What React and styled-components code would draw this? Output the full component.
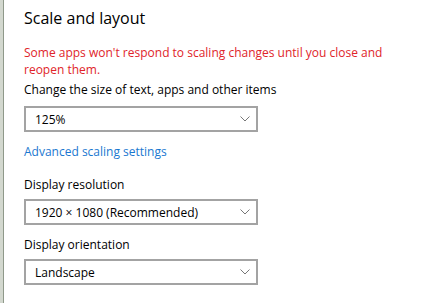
import React from 'react';
import styled, { createGlobalStyle } from 'styled-components';

const GlobalStyle = createGlobalStyle`
  html, body {
    margin: 0;
    padding: 0;
    background: #fff;
  }
  body {
    font-family: "Open Sans", "Noto Sans", sans-serif;
    color: #000;
  }
`;

const Page = styled.div`
  width: 436px;
  height: 303px;
  box-sizing: border-box;
  border-left: 3px solid #d3d8cf;
  box-shadow: inset 1px 0 0 #8f998a;
  padding: 6px 0 0 21px;
  overflow: hidden;
`;

const Title = styled.h2`
  margin: 0;
  font-size: 16px;
  font-weight: 400;
  line-height: 24px;
  color: #000;
`;

const Warning = styled.p`
  margin: 14px 0 0;
  max-width: 370px;
  font-size: 12px;
  line-height: 17px;
  color: #e0242a;
`;

const Label = styled.div`
  margin-top: ${p => p.gap}px;
  font-size: 12px;
  line-height: 17px;
  color: #000;
`;

const Select = styled.div`
  margin-top: ${p => p.gap}px;
  width: 234px;
  height: 26px;
  box-sizing: border-box;
  border: 2px solid #a3a3a3;
  display: flex;
  align-items: center;
  justify-content: space-between;
  padding: 0 6px 0 9px;
  font-size: 12px;
  line-height: 17px;
  color: #000;
`;

const Link = styled.a`
  display: block;
  margin-top: 11px;
  font-size: 12px;
  line-height: 17px;
  color: #1a78d0;
  text-decoration: none;
`;

const Chevron = () => (
  <svg width="10" height="6" viewBox="0 0 10 6">
    <path d="M0.5 0.5 L5 5 L9.5 0.5" fill="none" stroke="#777" strokeWidth="1" />
  </svg>
);

const Dropdown = ({ value, gap }) => (
  <Select gap={gap}>
    <span>{value}</span>
    <Chevron />
  </Select>
);

export default function App() {
  return (
    <>
      <GlobalStyle />
      <Page>
        <Title>Scale and layout</Title>
        <Warning>
          Some apps won't respond to scaling changes until you close and reopen them.
        </Warning>
        <Label gap={3}>Change the size of text, apps and other items</Label>
        <Dropdown value="125%" gap={8} />
        <Link href="#">Advanced scaling settings</Link>
        <Label gap={16}>Display resolution</Label>
        <Dropdown value="1920 × 1080 (Recommended)" gap={6} />
        <Label gap={11}>Display orientation</Label>
        <Dropdown value="Landscape" gap={6} />
      </Page>
    </>
  );
}
